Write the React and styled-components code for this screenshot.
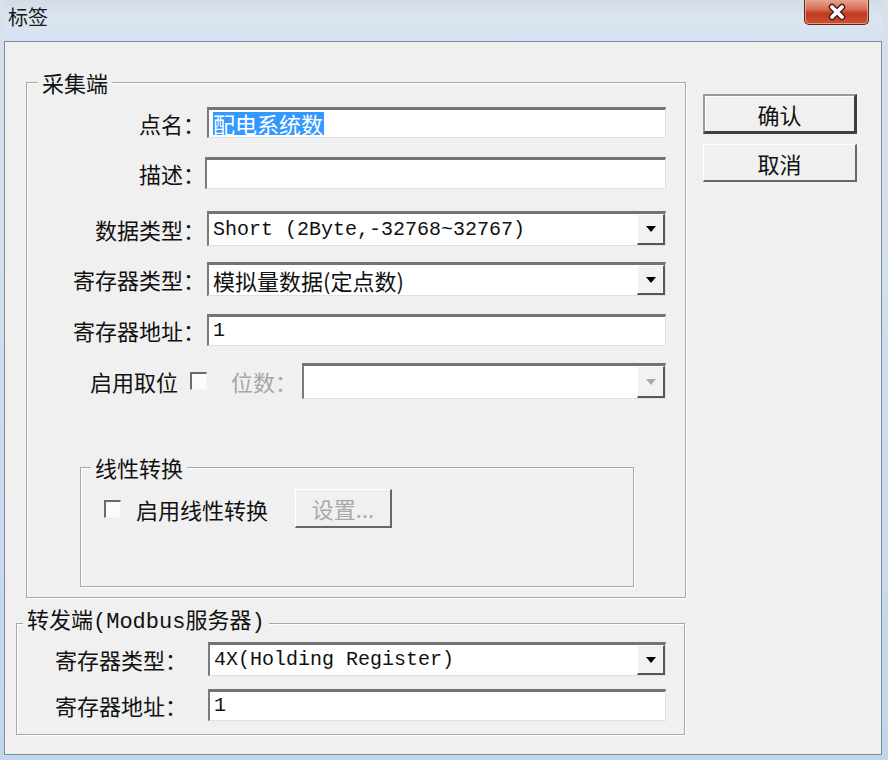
import styled, { createGlobalStyle } from 'styled-components';

const cjk = `"Noto Sans CJK SC", "Noto Sans", sans-serif`;
const mono = `"Liberation Mono", "Noto Sans CJK SC", monospace`;

const GlobalStyle = createGlobalStyle`
  html, body {
    margin: 0;
    padding: 0;
  }
  body {
    font-family: ${cjk};
    color: #111;
  }
  * {
    box-sizing: border-box;
  }
`;

const Frame = styled.div`
  width: 888px;
  height: 760px;
  padding: 0 6px 5px 4px;
  display: flex;
  flex-direction: column;
  overflow: hidden;
  background: linear-gradient(180deg, #d7e1ec 0%, #d2e0ee 30%, #c2d6eb 100%);
`;

const TitleBar = styled.div`
  flex: none;
  height: 41px;
  display: flex;
  justify-content: space-between;
  align-items: flex-start;
  background: linear-gradient(180deg, #d3dce6 0%, #dbe5ef 45%, #d3e2f1 100%);
`;

const Title = styled.div`
  padding: 4px 0 0 4px;
  font-family: ${cjk};
  font-size: 20px;
  line-height: 26px;
  color: #1b1b1b;
`;

const CloseButton = styled.div`
  margin: -1px 13px 0 0;
  width: 65px;
  height: 26px;
  display: flex;
  align-items: center;
  justify-content: center;
  border: 1px solid #5e261b;
  border-top: none;
  border-radius: 0 0 5px 5px;
  background: linear-gradient(180deg, #e8a996 0%, #d86f55 40%, #c23a20 58%, #cc5234 100%);
  box-shadow: inset 0 0 0 1px rgba(255, 215, 195, 0.55);
`;

const Client = styled.div`
  flex: 1;
  display: flex;
  border: 1px solid #7f8c9b;
  background: #f0f0f0;
`;

const LeftCol = styled.div`
  width: 681px;
  display: flex;
  flex-direction: column;
`;

const RightCol = styled.div`
  padding: 52px 0 0 17px;
  display: flex;
  flex-direction: column;
  gap: 10px;
`;

const Group = styled.fieldset`
  margin: ${(p) => p.$mt}px 0 0 ${(p) => p.$ml}px;
  width: ${(p) => p.$w}px;
  min-width: 0;
  padding: 0;
  border: 1px solid #a7a7a7;
  box-shadow: 1px 1px 0 #fff, inset 1px 1px 0 #fff;
`;

const Legend = styled.legend`
  margin-left: ${(p) => p.$ml}px;
  padding: 0 4px;
  background: #f0f0f0;
  font-family: ${(p) => (p.$mono ? mono : cjk)};
  font-size: 22px;
  line-height: 24px;
  color: #111;
`;

const GroupBody = styled.div`
  padding: ${(p) => p.$pad};
  display: flex;
  flex-direction: ${(p) => (p.$row ? 'row' : 'column')};
  align-items: ${(p) => (p.$row ? 'center' : 'stretch')};
`;

const Row = styled.div`
  display: flex;
  align-items: center;
  margin-top: ${(p) => p.$mt || 0}px;
  padding-left: ${(p) => p.$pl || 0}px;
`;

const Label = styled.div`
  flex: none;
  width: ${(p) => p.$w}px;
  text-align: ${(p) => p.$align || 'right'};
  font-size: 22px;
  line-height: 24px;
  white-space: nowrap;
  color: ${(p) => (p.$disabled ? '#a6a6a6' : '#111')};
  margin-left: ${(p) => p.$ml || 0}px;
`;

const Field = styled.div`
  flex: 1;
  min-width: 0;
  height: ${(p) => p.$h}px;
  margin-left: ${(p) => p.$ml || 0}px;
  display: flex;
  align-items: stretch;
  background: #fff;
  border-style: solid;
  border-width: 3px 1px 1px 2px;
  border-color: #737373 #e0e0e0 #e0e0e0 #7a7a7a;
`;

const Value = styled.div`
  flex: 1;
  min-width: 0;
  display: flex;
  align-items: center;
  padding-left: 4px;
  white-space: nowrap;
  font-family: ${(p) => (p.$mono ? mono : cjk)};
  font-size: ${(p) => (p.$mono ? 20 : 22)}px;
  line-height: 24px;
  color: #111;
`;

const Selected = styled.span`
  display: inline-block;
  height: 23px;
  line-height: 23px;
  background: #3399ff;
  color: #fff;
  padding-right: 1px;
`;

const DropButton = styled.div`
  flex: none;
  width: 28px;
  display: flex;
  align-items: center;
  justify-content: center;
  background: #f2f2f2;
  border-style: solid;
  border-width: 1px 2px 2px 1px;
  border-color: #fdfdfd #575757 #575757 #fdfdfd;

  &::after {
    content: '';
    border-left: 5px solid transparent;
    border-right: 5px solid transparent;
    border-top: 6px solid ${(p) => (p.$disabled ? '#a8a8a8' : '#000')};
  }
`;

const Check = styled.div`
  flex: none;
  width: 17px;
  height: 18px;
  margin-left: ${(p) => p.$ml || 0}px;
  background: #fbfbfb;
  border-style: solid;
  border-width: 2px 1px 1px 2px;
  border-color: #6c6c6c #f4f4f4 #f4f4f4 #6c6c6c;
`;

const Button = styled.div`
  flex: none;
  width: ${(p) => p.$w}px;
  height: ${(p) => p.$h}px;
  margin-left: ${(p) => p.$ml || 0}px;
  display: flex;
  align-items: center;
  justify-content: center;
  background: #f0f0f0;
  font-family: ${cjk};
  font-size: 22px;
  color: ${(p) => (p.$disabled ? '#a9a9a9' : '#111')};
  border-style: solid;
  border-width: ${(p) => (p.$default ? '2px 3px 3px 2px' : '1px 2px 2px 1px')};
  border-color: ${(p) =>
    p.$default ? '#9a9a9a #404040 #404040 #9a9a9a' : '#ffffff #676767 #676767 #ffffff'};
  box-shadow: ${(p) => (p.$default ? 'inset 1px 1px 0 #fff' : 'none')};
`;

function CloseIcon() {
  return (
    <svg width="22" height="18" viewBox="0 0 22 18">
      <path d="M6 4 L16 14 M16 4 L6 14" stroke="#4a1d14" strokeWidth="6.5" strokeLinecap="round" />
      <path d="M6 4 L16 14 M16 4 L6 14" stroke="#fff" strokeWidth="3.8" strokeLinecap="round" />
    </svg>
  );
}

function Combo({ h, ml, mono, disabled, children }) {
  return (
    <Field $h={h} $ml={ml}>
      <Value $mono={mono}>{children}</Value>
      <DropButton $disabled={disabled} />
    </Field>
  );
}

function TextBox({ h, ml, mono, children }) {
  return (
    <Field $h={h} $ml={ml}>
      <Value $mono={mono}>{children}</Value>
    </Field>
  );
}

export default function App() {
  return (
    <>
      <GlobalStyle />
      <Frame>
        <TitleBar>
          <Title>标签</Title>
          <CloseButton>
            <CloseIcon />
          </CloseButton>
        </TitleBar>

        <Client>
          <LeftCol>
            {/* 采集端 */}
            <Group $mt={28} $ml={21} $w={660}>
              <Legend $ml={11}>采集端</Legend>
              <GroupBody $pad="13px 19px 10px 0">
                <Row>
                  <Label $w={178}>点名：</Label>
                  <TextBox h={31} ml={2}>
                    <Selected>配电系统数</Selected>
                  </TextBox>
                </Row>
                <Row $mt={19}>
                  <Label $w={178}>描述：</Label>
                  <TextBox h={32} ml={0} />
                </Row>
                <Row $mt={22}>
                  <Label $w={178}>数据类型：</Label>
                  <Combo h={35} ml={2} mono>
                    Short (2Byte,-32768~32767)
                  </Combo>
                </Row>
                <Row $mt={16}>
                  <Label $w={178}>寄存器类型：</Label>
                  <Combo h={34} ml={2}>
                    模拟量数据(定点数)
                  </Combo>
                </Row>
                <Row $mt={18}>
                  <Label $w={178}>寄存器地址：</Label>
                  <TextBox h={32} ml={2} mono>
                    1
                  </TextBox>
                </Row>
                <Row $mt={17} $pl={63}>
                  <Label $w={88} $align="left">
                    启用取位
                  </Label>
                  <Check $ml={12} />
                  <Label $w={66} $align="left" $ml={24} $disabled>
                    位数：
                  </Label>
                  <Combo h={36} ml={5} disabled />
                </Row>

                {/* 线性转换 */}
                <Group $mt={56} $ml={53} $w={554}>
                  <Legend $ml={10}>线性转换</Legend>
                  <GroupBody $row $pad="10px 0 58px 23px">
                    <Check />
                    <Label $w={132} $align="left" $ml={15}>
                      启用线性转换
                    </Label>
                    <Button $w={97} $h={39} $ml={27} $disabled>
                      设置...
                    </Button>
                  </GroupBody>
                </Group>
              </GroupBody>
            </Group>

            {/* 转发端 */}
            <Group $mt={13} $ml={11} $w={669}>
              <Legend $ml={6} $mono>
                转发端(Modbus服务器)
              </Legend>
              <GroupBody $pad="7px 18px 13px 38px">
                <Row>
                  <Label $w={153} $align="left">
                    寄存器类型：
                  </Label>
                  <Combo h={34} mono>
                    4X(Holding Register)
                  </Combo>
                </Row>
                <Row $mt={13}>
                  <Label $w={153} $align="left">
                    寄存器地址：
                  </Label>
                  <TextBox h={32} mono>
                    1
                  </TextBox>
                </Row>
              </GroupBody>
            </Group>
          </LeftCol>

          <RightCol>
            <Button $w={154} $h={40} $default>
              确认
            </Button>
            <Button $w={154} $h={38}>
              取消
            </Button>
          </RightCol>
        </Client>
      </Frame>
    </>
  );
}
